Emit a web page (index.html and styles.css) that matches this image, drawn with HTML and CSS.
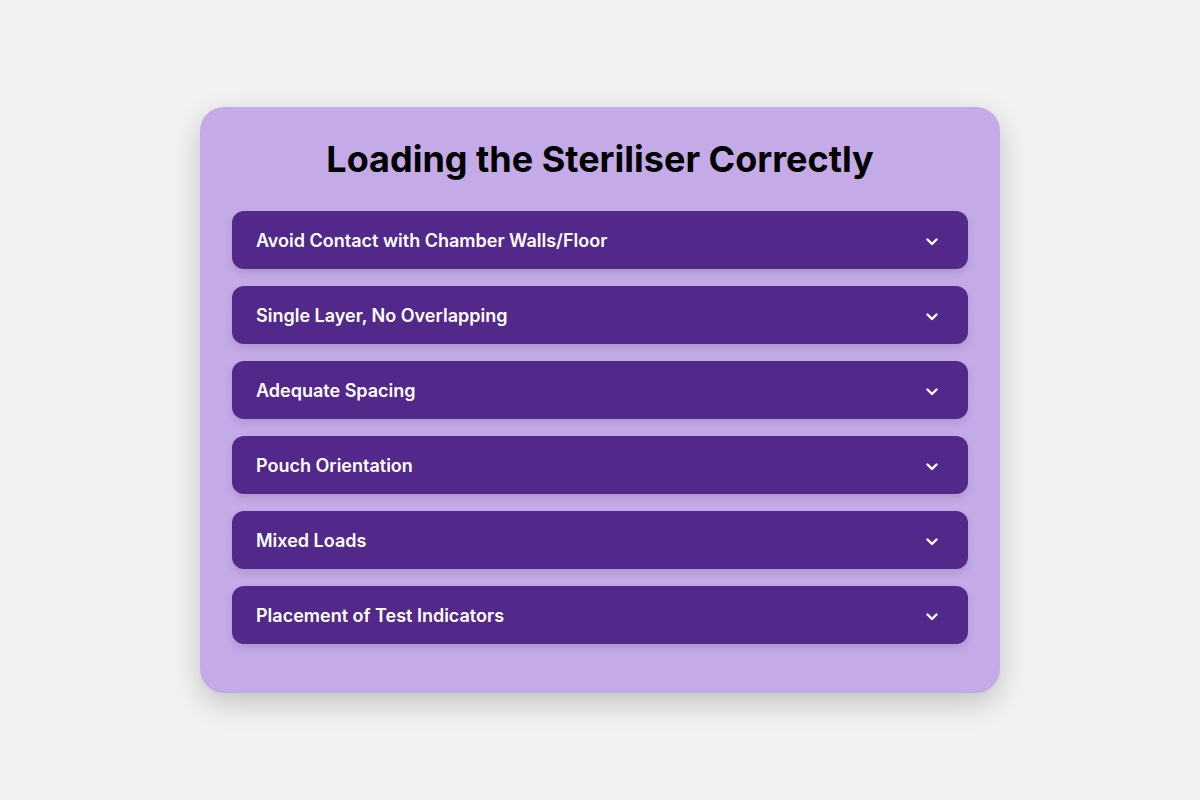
FILE: index.html
```html
<!DOCTYPE html>
<html lang="en">
<head>
<meta charset="utf-8">
<title>Loading the Steriliser Correctly</title>
<link rel="stylesheet" href="styles.css">
</head>
<body>
<main class="card">
  <h1 class="title">Loading the Steriliser Correctly</h1>
  <div class="list">
    <button class="item"><span>Avoid Contact with Chamber Walls/Floor</span><svg class="chev" viewBox="0 0 12 8" width="12" height="8"><path d="M1.5 1.5l4.5 4.5 4.5-4.5"/></svg></button>
    <button class="item"><span>Single Layer, No Overlapping</span><svg class="chev" viewBox="0 0 12 8" width="12" height="8"><path d="M1.5 1.5l4.5 4.5 4.5-4.5"/></svg></button>
    <button class="item"><span>Adequate Spacing</span><svg class="chev" viewBox="0 0 12 8" width="12" height="8"><path d="M1.5 1.5l4.5 4.5 4.5-4.5"/></svg></button>
    <button class="item"><span>Pouch Orientation</span><svg class="chev" viewBox="0 0 12 8" width="12" height="8"><path d="M1.5 1.5l4.5 4.5 4.5-4.5"/></svg></button>
    <button class="item"><span>Mixed Loads</span><svg class="chev" viewBox="0 0 12 8" width="12" height="8"><path d="M1.5 1.5l4.5 4.5 4.5-4.5"/></svg></button>
    <button class="item"><span>Placement of Test Indicators</span><svg class="chev" viewBox="0 0 12 8" width="12" height="8"><path d="M1.5 1.5l4.5 4.5 4.5-4.5"/></svg></button>
  </div>
</main>
</body>
</html>
```
FILE: styles.css
```css
* { box-sizing: border-box; }
html, body { margin: 0; }
body {
  background: #f2f2f2;
  font-family: Inter, "Noto Sans", sans-serif;
  min-height: 800px;
  display: flex;
  align-items: center;
  justify-content: center;
}
.card {
  width: 800px;
  background: #c4abe8;
  border-radius: 24px;
  padding: 30px 32px 49px;
  box-shadow: 0 10px 30px rgba(0, 0, 0, 0.2);
}
.title {
  margin: 0 0 30px;
  text-align: center;
  font-size: 36px;
  font-weight: 700;
  line-height: 44px;
  color: #000;
}
.list {
  display: flex;
  flex-direction: column;
  gap: 17px;
}
.item {
  display: flex;
  align-items: center;
  justify-content: space-between;
  width: 100%;
  height: 58px;
  padding: 0 30px 0 24px;
  border: none;
  border-radius: 12px;
  background: #52288a;
  color: #fff;
  font-family: inherit;
  font-size: 18px;
  font-weight: 600;
  text-align: left;
  box-shadow: 0 4px 8px rgba(0, 0, 0, 0.12);
  cursor: pointer;
}
.chev {
  margin-top: 3px;
  fill: none;
  stroke: #fff;
  stroke-width: 2.4;
  stroke-linecap: round;
  stroke-linejoin: round;
}
```
